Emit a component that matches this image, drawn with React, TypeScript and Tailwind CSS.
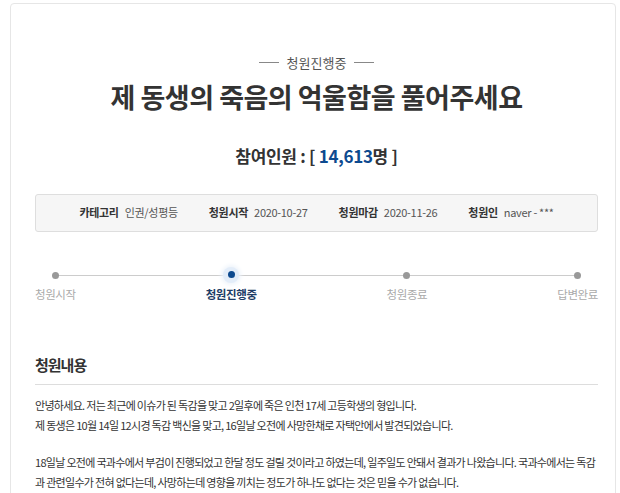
const steps = [
  { label: "청원시작", active: false },
  { label: "청원진행중", active: true },
  { label: "청원종료", active: false },
  { label: "답변완료", active: false },
];

const info = [
  { k: "카테고리", v: "인권/성평등" },
  { k: "청원시작", v: "2020-10-27" },
  { k: "청원마감", v: "2020-11-26" },
  { k: "청원인", v: "naver - ***" },
];

export default function App() {
  return (
    <div
      className="h-[493px] bg-white pl-[10px] pr-[4px] pt-[3px] overflow-hidden"
      style={{ fontFamily: '"Noto Sans CJK KR", "Noto Sans", sans-serif' }}
    >
      <div className="h-[520px] rounded-t-[4px] border border-[#e6e6e6] bg-white pl-[24px] pr-[17px]">
        <div className="mt-[49px] flex items-center justify-center gap-[8px] text-[13px] text-[#555]">
          <span className="h-px w-[20px] bg-[#888]" />
          <span>청원진행중</span>
          <span className="h-px w-[20px] bg-[#888]" />
        </div>
        <h1 className="mt-[7px] text-center text-[27px] font-bold leading-[34px] tracking-[-0.5px] text-[#333]">
          제 동생의 죽음의 억울함을 풀어주세요
        </h1>
        <p className="mt-[29px] text-center text-[17px] font-bold leading-[26px] tracking-[-0.3px] text-[#333]">
          참여인원 : [ <span className="text-[#0d4a8f]">14,613</span>명 ]
        </p>
        <div className="mt-[25px] flex h-[38px] items-center justify-center gap-[31px] rounded-[3px] border border-[#dedede] bg-[#f6f6f6] text-[11px] tracking-[-0.3px] text-[#555]">
          {info.map((i) => (
            <div key={i.k} className="flex items-center gap-[6px]">
              <span className="font-bold text-[#333]">{i.k}</span>
              <span>{i.v}</span>
            </div>
          ))}
        </div>
        <div className="relative mt-[39px] h-[40px]">
          <div className="absolute left-[18px] right-[18px] top-[4px] h-px bg-[#ccc]" />
          <div className="relative flex justify-between">
            {steps.map((s) => (
              <div key={s.label} className="flex flex-col items-center gap-[7px]">
                {s.active ? (
                  <span className="-my-[4px] flex h-[16px] w-[16px] items-center justify-center rounded-full bg-[#e3edf9] shadow-[0_0_4px_2px_#eef4fb]">
                    <span className="h-[7px] w-[7px] rounded-full bg-[#0d4a8f]" />
                  </span>
                ) : (
                  <span className="mt-[1px] h-[7px] w-[7px] rounded-full bg-[#999]" />
                )}
                <span
                  className={
                    s.active
                      ? "text-[11.5px] font-bold tracking-[-0.4px] text-[#1d3c66]"
                      : "text-[11.5px] tracking-[-0.4px] text-[#aaa]"
                  }
                >
                  {s.label}
                </span>
              </div>
            ))}
          </div>
        </div>
        <h2 className="mt-[43px] border-b border-[#ddd] pb-[8px] text-[15px] font-bold leading-[22px] tracking-[-1px] text-[#333]">
          청원내용
        </h2>
        <div className="mt-[10px] whitespace-nowrap text-[11px] leading-[20px] tracking-[-0.7px] text-[#333]">
          <p>안녕하세요. 저는 최근에 이슈가 된 독감을 맞고 2일후에 죽은 인천 17세 고등학생의 형입니다.</p>
          <p>제 동생은 10월 14일 12시경 독감 백신을 맞고, 16일날 오전에 사망한채로 자택안에서 발견되었습니다.</p>
          <div className="h-[17px]" />
          <p>18일날 오전에 국과수에서 부검이 진행되었고 한달 정도 걸릴 것이라고 하였는데, 일주일도 안돼서 결과가 나왔습니다. 국과수에서는 독감</p>
          <p>과 관련일수가 전혀 없다는데, 사망하는데 영향을 끼치는 정도가 하나도 없다는 것은 믿을 수가 없습니다.</p>
        </div>
      </div>
    </div>
  );
}
